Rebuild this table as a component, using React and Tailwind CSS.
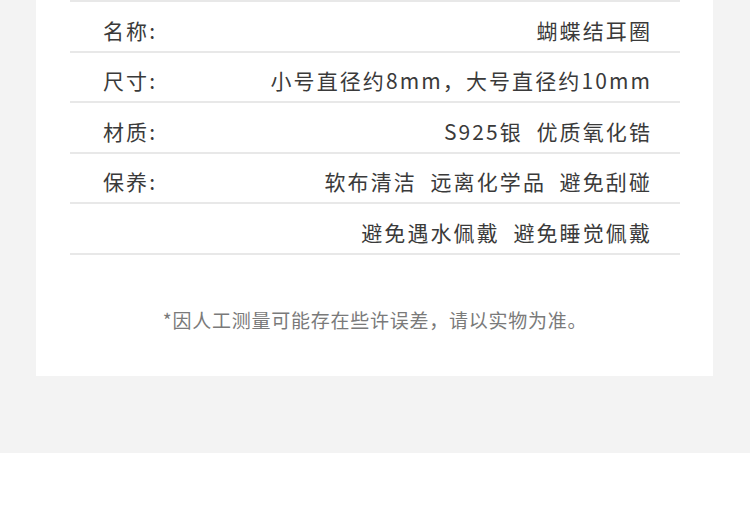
const rows = [
    { label: '名称:', value: '蝴蝶结耳圈' },
    { label: '尺寸:', value: '小号直径约8mm，大号直径约10mm' },
    { label: '材质:', value: 'S925银  优质氧化锆' },
    { label: '保养:', value: '软布清洁  远离化学品  避免刮碰' },
    { label: '', value: '避免遇水佩戴  避免睡觉佩戴' },
];

const cjk = { fontFamily: '"Noto Sans CJK SC", "Noto Sans", sans-serif' };

export default function App() {
    return (
        <div className="w-[750px] h-[524px] bg-white overflow-hidden" style={cjk}>
            <div className="h-[453px] bg-[#f3f3f3] px-[36px] pr-[37px]">
                <div className="bg-white h-[376px] px-[34px] pr-[33px]">
                    <div className="border-t-2 border-[#e8e8e8]">
                        {rows.map((row, i) => (
                            <div
                                key={i}
                                className="h-[50.5px] border-b-2 border-[#e8e8e8] flex items-center justify-between pt-[8px] pl-[33px] pr-[28px] text-[21px] tracking-[2.1px] text-[#3a3a3a] whitespace-pre"
                            >
                                <span>{row.label}</span>
                                <span>{row.value}</span>
                            </div>
                        ))}
                    </div>
                    <div className="pt-[51px] text-center text-[19px] tracking-[0.75px] text-[#7a7a7a]">
                        *因人工测量可能存在些许误差，请以实物为准。
                    </div>
                </div>
            </div>
        </div>
    );
}
